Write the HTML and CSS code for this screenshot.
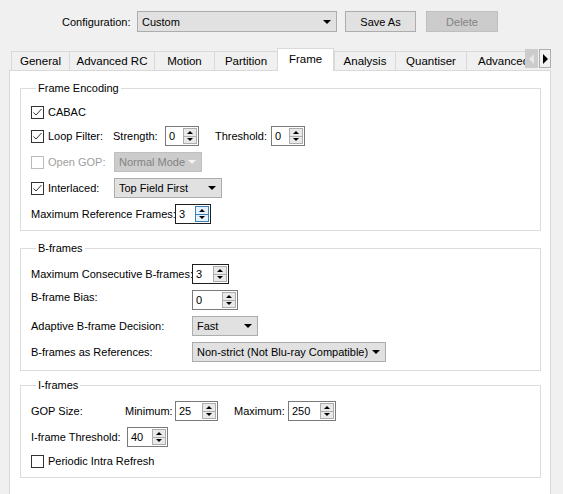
FILE: index.html
```html
<!DOCTYPE html>
<html>
<head>
<meta charset="utf-8">
<link rel="stylesheet" href="styles.css">
</head>
<body>
<div class="window">
  <div class="config-row">
    <span class="config-label">Configuration:</span>
    <div class="combo combo-config"><span class="combo-text">Custom</span><i class="arrow"></i></div>
    <button class="btn btn-save">Save As</button>
    <button class="btn btn-delete" disabled>Delete</button>
  </div>

  <div class="tabbar">
    <div class="tabs">
      <div class="tab t-general">General</div>
      <div class="tab t-arc">Advanced RC</div>
      <div class="tab t-motion">Motion</div>
      <div class="tab t-partition">Partition</div>
      <div class="tab t-frame selected">Frame</div>
      <div class="tab t-analysis">Analysis</div>
      <div class="tab t-quant">Quantiser</div>
      <div class="tab t-adv">Advanced</div>
    </div>
    <div class="tab-scroll">
      <span class="scroll-btn scroll-left"><i class="tri-left"></i></span>
      <span class="scroll-btn scroll-right"><i class="tri-right"></i></span>
    </div>
  </div>

  <div class="pane">
    <fieldset class="group g-frame">
      <legend>Frame Encoding</legend>
      <div class="row row-first">
        <label class="check"><span class="box checked"><svg width="13" height="13" viewBox="0 0 13 13"><polyline points="2.5,6.5 5,9 10.5,3" fill="none" stroke="#333" stroke-width="1"/></svg></span><span>CABAC</span></label>
      </div>
      <div class="row">
        <label class="check c-first"><span class="box checked"><svg width="13" height="13" viewBox="0 0 13 13"><polyline points="2.5,6.5 5,9 10.5,3" fill="none" stroke="#333" stroke-width="1"/></svg></span><span>Loop Filter:</span></label>
        <span class="lbl l-strength">Strength:</span>
        <div class="spin s-strength"><span class="spin-val">0</span><span class="spin-btns"><span class="sb"><i class="tri-up"></i></span><span class="sb"><i class="tri-down"></i></span></span></div>
        <span class="lbl l-threshold">Threshold:</span>
        <div class="spin s-threshold"><span class="spin-val">0</span><span class="spin-btns"><span class="sb"><i class="tri-up"></i></span><span class="sb"><i class="tri-down"></i></span></span></div>
      </div>
      <div class="row">
        <label class="check c-first disabled"><span class="box"></span><span>Open GOP:</span></label>
        <div class="combo combo-disabled c-opengop"><span class="combo-text">Normal Mode</span><i class="arrow arrow-light"></i></div>
      </div>
      <div class="row">
        <label class="check c-first"><span class="box checked"><svg width="13" height="13" viewBox="0 0 13 13"><polyline points="2.5,6.5 5,9 10.5,3" fill="none" stroke="#333" stroke-width="1"/></svg></span><span>Interlaced:</span></label>
        <div class="combo c-interlaced"><span class="combo-text">Top Field First</span><i class="arrow"></i></div>
      </div>
      <div class="row">
        <span class="lbl l-maxref">Maximum Reference Frames:</span>
        <div class="spin focused s-maxref"><span class="spin-val">3</span><span class="spin-btns"><span class="sb"><i class="tri-up"></i></span><span class="sb"><i class="tri-down"></i></span></span></div>
      </div>
    </fieldset>

    <fieldset class="group g-bframes">
      <legend>B-frames</legend>
      <div class="grid">
        <span class="lbl">Maximum Consecutive B-frames:</span>
        <div class="spin dark s-maxb"><span class="spin-val">3</span><span class="spin-btns"><span class="sb"><i class="tri-up"></i></span><span class="sb"><i class="tri-down"></i></span></span></div>
        <span class="lbl lbl-top">B-frame Bias:</span>
        <div class="spin s-bias"><span class="spin-val">0</span><span class="spin-btns"><span class="sb"><i class="tri-up"></i></span><span class="sb"><i class="tri-down"></i></span></span></div>
        <span class="lbl">Adaptive B-frame Decision:</span>
        <div class="combo c-adaptive"><span class="combo-text">Fast</span><i class="arrow"></i></div>
        <span class="lbl">B-frames as References:</span>
        <div class="combo c-bref"><span class="combo-text">Non-strict (Not Blu-ray Compatible)</span><i class="arrow"></i></div>
      </div>
    </fieldset>

    <fieldset class="group g-iframes">
      <legend>I-frames</legend>
      <div class="row">
        <span class="lbl l-gop">GOP Size:</span>
        <span class="lbl l-min">Minimum:</span>
        <div class="spin s-min"><span class="spin-val">25</span><span class="spin-btns"><span class="sb"><i class="tri-up"></i></span><span class="sb"><i class="tri-down"></i></span></span></div>
        <span class="lbl l-max">Maximum:</span>
        <div class="spin s-max"><span class="spin-val">250</span><span class="spin-btns"><span class="sb"><i class="tri-up"></i></span><span class="sb"><i class="tri-down"></i></span></span></div>
      </div>
      <div class="row row-tight">
        <span class="lbl l-ithr">I-frame Threshold:</span>
        <div class="spin s-ithr"><span class="spin-val">40</span><span class="spin-btns"><span class="sb"><i class="tri-up"></i></span><span class="sb"><i class="tri-down"></i></span></span></div>
      </div>
      <div class="row">
        <label class="check"><span class="box"></span><span>Periodic Intra Refresh</span></label>
      </div>
    </fieldset>
  </div>
</div>
</body>
</html>
```

FILE: styles.css
```css
* { box-sizing: border-box; }
html, body {
  margin: 0;
  padding: 0;
  background: #f0f0f0;
}
body {
  font-family: "Liberation Sans", Arial, sans-serif;
  font-size: 11px;
  color: #000;
  width: 563px;
  height: 494px;
  overflow: hidden;
}
.window {
  width: 563px;
  height: 494px;
  overflow: hidden;
}

/* top configuration row */
.config-row {
  display: flex;
  align-items: center;
  height: 21px;
  margin-top: 11px;
  padding-left: 62px;
}
.config-label { width: 75px; }
.combo {
  position: relative;
  display: flex;
  align-items: center;
  height: 20px;
  background: #e1e1e1;
  border: 1px solid #adadad;
  padding-left: 4px;
  flex: none;
}
.combo-config { width: 200px; height: 21px; }
.combo-text { white-space: nowrap; }
.arrow {
  position: absolute;
  right: 5px;
  top: 50%;
  margin-top: -2px;
  width: 0;
  height: 0;
  border-left: 4px solid transparent;
  border-right: 4px solid transparent;
  border-top: 4px solid #000;
}
.arrow-light { border-top-color: #f4f4f4; }
.btn {
  font: inherit;
  height: 21px;
  background: #e1e1e1;
  border: 1px solid #adadad;
  color: #000;
  padding: 0;
}
.btn-save { width: 71px; margin-left: 8px; }
.btn-delete {
  width: 72px;
  margin-left: 10px;
  background: #cccccc;
  border-color: #bfbfbf;
  color: #838383;
}

/* tab bar */
.tabbar {
  display: flex;
  align-items: flex-end;
  margin-top: 16px;
  height: 22px;
  padding-left: 11px;
  position: relative;
  z-index: 2;
}
.tabs {
  display: flex;
  align-items: flex-end;
  width: 514px;
  overflow: hidden;
  height: 23px;
  margin-bottom: -1px;
}
.tab {
  flex: none;
  height: 20px;
  display: flex;
  align-items: center;
  justify-content: center;
  border: 1px solid #d9d9d9;
  border-right: none;
  background: #f0f0f0;
  white-space: nowrap;
  font-size: 11.5px;
}
.t-general { width: 58px; }
.t-arc { width: 85px; }
.t-motion { width: 60px; }
.t-partition { width: 63px; }
.t-frame { width: 57px; }
.t-analysis { width: 61px; border-left: 1px solid #d9d9d9; }
.t-quant { width: 71px; }
.t-adv { width: 70px; justify-content: flex-start; padding-left: 11px; }
.tab.selected {
  background: #fff;
  border: 1px solid #d9d9d9;
  border-bottom: none;
  padding-bottom: 3px;
  height: 23px;
}
.tab-scroll {
  display: flex;
  gap: 1px;
  align-self: flex-start;
  margin-top: 1px;
}
.scroll-btn {
  width: 13px;
  height: 19px;
  display: flex;
  align-items: center;
  justify-content: center;
}
.scroll-left { background: #cccccc; }
.scroll-right { background: #f0f0f0; border: 1px solid #adadad; width: 12px; }
.tri-left {
  width: 0; height: 0;
  border-top: 5px solid transparent;
  border-bottom: 5px solid transparent;
  border-right: 5px solid #e8e8e8;
}
.tri-right {
  width: 0; height: 0;
  border-top: 5px solid transparent;
  border-bottom: 5px solid transparent;
  border-left: 5px solid #000;
}

/* pane */
.pane {
  margin-left: 9px;
  width: 542px;
  height: 440px;
  background: #fff;
  border: 1px solid #d9d9d9;
  padding: 10px 10px 0 10px;
}

.group {
  margin: 0 0 9px 0;
  border: 1px solid #dcdcdc;
  padding: 6px 10px 6px 10px;
  width: 521px;
}
.group legend {
  padding: 0 2px;
  margin-left: 5px;
  line-height: 14px;
}
.g-frame { padding-top: 7px; margin-bottom: 10px; }
.g-bframes { padding-top: 9px; padding-bottom: 8px; margin-bottom: 7px; }
.g-iframes { padding-top: 9px; padding-bottom: 6px; }

.row {
  display: flex;
  align-items: center;
  height: 20px;
  margin-bottom: 6px;
}
.row:last-child { margin-bottom: 0; }
.row-first { margin-bottom: 4px; }
.row-tight { margin-bottom: 4px; }

.lbl { white-space: nowrap; flex: none; }

.check {
  display: flex;
  align-items: center;
  white-space: nowrap;
}
.check .box {
  width: 13px;
  height: 13px;
  border: 1px solid #333;
  background: #fff;
  margin-right: 4px;
  position: relative;
  flex: none;
}
.check .box svg { position: absolute; left: -1px; top: -1px; }
.check.disabled { color: #a0a0a0; }
.check.disabled .box { border-color: #bcbcbc; }
.c-first { width: 82px; flex: none; }
.c-opengop, .c-interlaced { margin-left: 1px; }

.l-strength { width: 52px; }
.l-threshold { width: 56px; margin-left: 16px; }
.l-maxref { width: 144px; }
.c-opengop { width: 88px; }
.c-interlaced { width: 108px; }

.combo-disabled {
  background: #cccccc;
  border-color: #bfbfbf;
  color: #838383;
}

/* spin boxes */
.spin {
  display: flex;
  height: 20px;
  border: 1px solid #7a7a7a;
  background: #fff;
  flex: none;
}
.spin.dark, .spin.focused { border-color: #1e1e1e; }
.spin-val {
  flex: 1;
  padding-left: 3px;
  line-height: 18px;
}
.spin-btns {
  width: 15px;
  display: flex;
  flex-direction: column;
  padding: 1px 1px 1px 0;
}
.sb {
  flex: 1;
  display: flex;
  align-items: center;
  justify-content: center;
  background: #e9e9e9;
  border: 1px solid #adadad;
}
.sb + .sb { border-top: none; }
.focused .sb { background: #e5f1fb; border-color: #3c7fb1; }
.tri-up {
  width: 0; height: 0;
  border-left: 3px solid transparent;
  border-right: 3px solid transparent;
  border-bottom: 3px solid #000;
}
.tri-down {
  width: 0; height: 0;
  border-left: 3px solid transparent;
  border-right: 3px solid transparent;
  border-top: 3px solid #000;
}
.s-strength { width: 34px; }
.s-threshold { width: 34px; }
.s-maxref { width: 36px; }
.s-maxb { width: 37px; }
.s-bias { width: 46px; }
.s-min { width: 43px; }
.s-max { width: 48px; }
.s-ithr { width: 41px; }

/* B-frames grid */
.grid {
  display: grid;
  grid-template-columns: 161px auto;
  grid-auto-rows: 20px;
  row-gap: 6px;
  align-items: center;
  justify-items: start;
}
.grid .lbl-top { align-self: start; padding-top: 1px; }
.c-adaptive { width: 66px; }
.c-bref { width: 194px; }

/* I-frames */
.l-gop { width: 94px; }
.l-min { width: 50px; }
.l-max { width: 54px; margin-left: 16px; }
.l-ithr { width: 96px; }
```
